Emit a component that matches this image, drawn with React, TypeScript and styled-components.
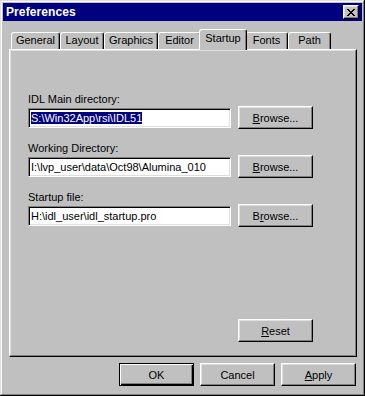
import * as React from "react";
import styled, { createGlobalStyle } from "styled-components";

const GlobalStyle = createGlobalStyle`
  html, body {
    margin: 0;
    padding: 0;
    background: #c0c0c0;
  }
  body {
    font-family: "Liberation Sans", Arial, sans-serif;
    font-size: 11px;
    color: #000;
  }
`;

const Window = styled.div`
  width: 365px;
  height: 396px;
  box-sizing: border-box;
  padding: 3px;
  background: #c0c0c0;
  box-shadow: inset -1px -1px #000, inset 1px 1px #dfdfdf,
    inset -2px -2px #808080, inset 2px 2px #fff;
  display: flex;
  flex-direction: column;
`;

const TitleBar = styled.div`
  height: 18px;
  background: #000080;
  color: #fff;
  display: flex;
  align-items: center;
  justify-content: space-between;
  padding: 0 3px 0 3px;
`;

const Title = styled.div`
  font-weight: bold;
  font-size: 12px;
  letter-spacing: 0.1px;
`;

const CloseButton = styled.div`
  width: 16px;
  height: 14px;
  box-sizing: border-box;
  background: #c0c0c0;
  border: 1px solid;
  border-color: #fff #000 #000 #fff;
  box-shadow: inset -1px -1px #808080, inset 1px 1px #dfdfdf;
  display: flex;
  align-items: center;
  justify-content: center;
`;

const Body = styled.div`
  display: flex;
  flex-direction: column;
  padding: 8px 5px 0 6px;
`;

const TabRow = styled.div`
  display: flex;
  align-items: flex-end;
  height: 20px;
  padding-left: 2px;
  position: relative;
  z-index: 1;
`;

const Tab = styled.div<{ $w: number; $active?: boolean }>`
  position: relative;
  box-sizing: border-box;
  width: ${(p) => (p.$active ? p.$w + 4 : p.$w)}px;
  height: ${(p) => (p.$active ? 21 : 17)}px;
  margin: ${(p) => (p.$active ? "0 -2px -1px" : "0")};
  z-index: ${(p) => (p.$active ? 2 : 1)};
  background: #c0c0c0;
  border: 1px solid;
  border-bottom: none;
  border-color: #fff #000 transparent #fff;
  border-radius: 3px 3px 0 0;
  box-shadow: inset -1px 0 #808080;
  text-align: center;
  line-height: ${(p) => (p.$active ? 16 : 15)}px;
  white-space: nowrap;
`;

const Panel = styled.div`
  height: 308px;
  box-sizing: border-box;
  border: 1px solid;
  border-color: #fff #000 #000 #fff;
  box-shadow: inset -1px -1px #808080, inset 1px 1px #dfdfdf;
  padding: 43px 0 14px 18px;
  display: flex;
  flex-direction: column;
  gap: 13px;
`;

const FieldGroup = styled.div`
  display: flex;
  flex-direction: column;
`;

const Label = styled.div`
  height: 13px;
  line-height: 13px;
`;

const ControlRow = styled.div`
  display: flex;
  align-items: center;
  gap: 7px;
  height: 23px;
`;

const TextField = styled.div`
  width: 203px;
  height: 20px;
  box-sizing: border-box;
  background: #fff;
  border: 1px solid;
  border-color: #808080 #fff #fff #808080;
  box-shadow: inset 1px 1px #000, inset -1px -1px #dfdfdf;
  padding: 0 2px 0 2px;
  display: flex;
  align-items: center;
  white-space: nowrap;
  overflow: hidden;
`;

const Selected = styled.span`
  background: #000080;
  color: #fff;
  line-height: 12px;
`;

const Button = styled.button<{ $default?: boolean }>`
  width: 75px;
  height: 23px;
  box-sizing: border-box;
  padding: 0;
  margin: 0;
  background: #c0c0c0;
  font-family: "Liberation Sans", Arial, sans-serif;
  font-size: 11px;
  color: #000;
  border: 1px solid;
  border-color: ${(p) => (p.$default ? "#000" : "#fff #000 #000 #fff")};
  box-shadow: ${(p) =>
    p.$default
      ? "inset 1px 1px #fff, inset -1px -1px #000, inset -2px -2px #808080"
      : "inset -1px -1px #808080, inset 1px 1px #dfdfdf"};
`;

const ResetRow = styled.div`
  margin-top: auto;
  padding-left: 210px;
`;

const Footer = styled.div`
  display: flex;
  justify-content: flex-end;
  gap: 6px;
  padding: 6px 1px 0 0;
`;

const XGlyph = () => {
  const rows = ["XX....XX", ".XX..XX.", "..XXXX..", "...XX...", "..XXXX..", ".XX..XX.", "XX....XX"];
  return (
    <svg width="8" height="7" viewBox="0 0 8 7" shapeRendering="crispEdges">
      {rows.map((r, y) =>
        r.split("").map((c, x) =>
          c === "X" ? <rect key={`${x}-${y}`} x={x} y={y} width="1" height="1" fill="#000" /> : null
        )
      )}
    </svg>
  );
};

const tabs = [
  { name: "General", w: 49 },
  { name: "Layout", w: 44 },
  { name: "Graphics", w: 54 },
  { name: "Editor", w: 43 },
  { name: "Startup", w: 44, active: true },
  { name: "Fonts", w: 43 },
  { name: "Path", w: 43 },
];

export default function App() {
  return (
    <>
      <GlobalStyle />
      <Window>
        <TitleBar>
          <Title>Preferences</Title>
          <CloseButton>
            <XGlyph />
          </CloseButton>
        </TitleBar>
        <Body>
          <TabRow>
            {tabs.map((t) => (
              <Tab key={t.name} $w={t.w} $active={t.active}>
                {t.name}
              </Tab>
            ))}
          </TabRow>
          <Panel>
            <FieldGroup>
              <Label>IDL Main directory:</Label>
              <ControlRow>
                <TextField>
                  <Selected>S:\Win32App\rsi\IDL51</Selected>
                </TextField>
                <Button>
                  <u>B</u>rowse...
                </Button>
              </ControlRow>
            </FieldGroup>
            <FieldGroup>
              <Label>Working Directory:</Label>
              <ControlRow>
                <TextField>I:\lvp_user\data\Oct98\Alumina_010</TextField>
                <Button>
                  <u>B</u>rowse...
                </Button>
              </ControlRow>
            </FieldGroup>
            <FieldGroup>
              <Label>Startup file:</Label>
              <ControlRow>
                <TextField>H:\idl_user\idl_startup.pro</TextField>
                <Button>
                  B<u>r</u>owse...
                </Button>
              </ControlRow>
            </FieldGroup>
            <ResetRow>
              <Button>
                <u>R</u>eset
              </Button>
            </ResetRow>
          </Panel>
          <Footer>
            <Button $default>OK</Button>
            <Button>Cancel</Button>
            <Button>
              <u>A</u>pply
            </Button>
          </Footer>
        </Body>
      </Window>
    </>
  );
}
